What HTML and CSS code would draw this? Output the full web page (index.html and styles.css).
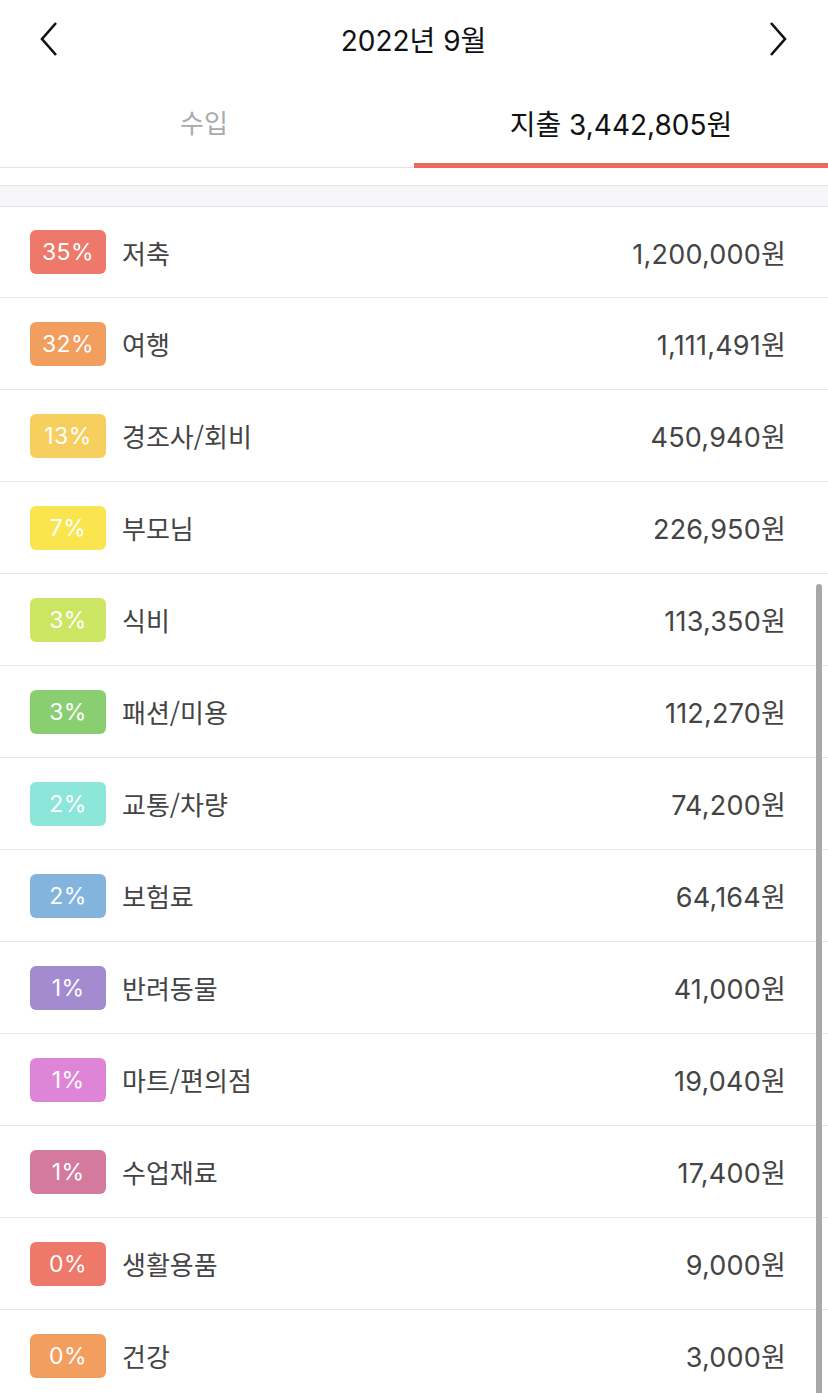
FILE: index.html
```html
<!DOCTYPE html>
<html lang="ko">
<head>
<meta charset="utf-8">
<link rel="stylesheet" href="styles.css">
</head>
<body>
<div class="page">
  <header class="header">
    <svg class="chev" width="20" height="36" viewBox="0 0 20 36"><path d="M17 2 L3 18 L17 34" fill="none" stroke="#111" stroke-width="2.6"/></svg>
    <div class="title">2022년 9월</div>
    <svg class="chev" width="20" height="36" viewBox="0 0 20 36"><path d="M3 2 L17 18 L3 34" fill="none" stroke="#111" stroke-width="2.6"/></svg>
  </header>
  <nav class="tabs">
    <div class="tab"><span class="tab-text">수입</span></div>
    <div class="tab active">지출 3,442,805원</div>
  </nav>
  <div class="spacer"></div>
  <div class="band"></div>
  <ul class="list">
    <li class="row"><span class="badge c1">35%</span><span class="label">저축</span><span class="amount">1,200,000원</span></li>
    <li class="row"><span class="badge c2">32%</span><span class="label">여행</span><span class="amount">1,111,491원</span></li>
    <li class="row"><span class="badge c3">13%</span><span class="label">경조사/회비</span><span class="amount">450,940원</span></li>
    <li class="row"><span class="badge c4">7%</span><span class="label">부모님</span><span class="amount">226,950원</span></li>
    <li class="row"><span class="badge c5">3%</span><span class="label">식비</span><span class="amount">113,350원</span></li>
    <li class="row"><span class="badge c6">3%</span><span class="label">패션/미용</span><span class="amount">112,270원</span></li>
    <li class="row"><span class="badge c7">2%</span><span class="label">교통/차량</span><span class="amount">74,200원</span></li>
    <li class="row"><span class="badge c8">2%</span><span class="label">보험료</span><span class="amount">64,164원</span></li>
    <li class="row"><span class="badge c9">1%</span><span class="label">반려동물</span><span class="amount">41,000원</span></li>
    <li class="row"><span class="badge c10">1%</span><span class="label">마트/편의점</span><span class="amount">19,040원</span></li>
    <li class="row"><span class="badge c11">1%</span><span class="label">수업재료</span><span class="amount">17,400원</span></li>
    <li class="row"><span class="badge c1">0%</span><span class="label">생활용품</span><span class="amount">9,000원</span></li>
    <li class="row"><span class="badge c2">0%</span><span class="label">건강</span><span class="amount">3,000원</span></li>
  </ul>
  <div class="scrollbar"></div>
</div>
</body>
</html>
```
FILE: styles.css
```css
* { box-sizing: border-box; }
html, body { margin: 0; padding: 0; background: #fff; }
body {
  font-family: "Noto Sans CJK KR", "Noto Sans", sans-serif;
  overflow: hidden;
  height: 1393px;
}
.page { position: relative; width: 828px; height: 1393px; overflow: hidden; }
.header {
  height: 82px;
  display: flex;
  align-items: center;
  justify-content: space-between;
  padding: 0 40px 4px 39px;
}
.title {
  font-family: Inter, "Noto Sans CJK KR", sans-serif;
  font-size: 28px;
  color: #111;
}
.chev { display: block; }
.tabs {
  display: grid;
  grid-template-columns: 414px 414px;
  height: 86px;
  border-bottom: 1px solid #e4e4e4;
}
.tab {
  display: flex;
  align-items: center;
  justify-content: center;
  font-family: Inter, "Noto Sans CJK KR", sans-serif;
  font-size: 26px;
  color: #aaa;
  padding-bottom: 6px;
}
.tab-text { margin-right: 6px; }
.tab.active {
  color: #111;
  font-size: 28px;
  border-bottom: 5px solid #ea6b5e;
  margin-bottom: -1px;
  padding: 0;
}
.spacer { height: 17px; }
.band {
  height: 22px;
  background: #f6f6f8;
  border-top: 1px solid #e6e6e8;
  border-bottom: 1px solid #e6e6e8;
}
.list { list-style: none; margin: 0; padding: 0; }
.row {
  height: 92px;
  display: flex;
  align-items: center;
  padding: 0 42px 0 30px;
  border-bottom: 1px solid #e6e6e6;
}
.row:first-child { height: 91px; }
.badge {
  width: 76px;
  height: 44px;
  border-radius: 6px;
  display: flex;
  align-items: center;
  justify-content: center;
  color: #fff;
  font-size: 23px;
  font-family: Inter, sans-serif;
  letter-spacing: 0.4px;
}
.label {
  margin-left: 16px;
  font-size: 26px;
  color: #444;
  flex: 1;
}
.amount {
  font-size: 27px;
  color: #444;
  font-family: Inter, "Noto Sans CJK KR", sans-serif;
  letter-spacing: 0.2px;
}
.c1 { background: #ee7869; }
.c2 { background: #f19e5f; }
.c3 { background: #f6cf5f; }
.c4 { background: #fae54e; }
.c5 { background: #cce563; }
.c6 { background: #89cf72; }
.c7 { background: #8ce6da; }
.c8 { background: #82b4de; }
.c9 { background: #a38bd0; }
.c10 { background: #df85d8; }
.c11 { background: #d47a9e; }
.scrollbar {
  position: absolute;
  left: 816px;
  top: 584px;
  width: 6px;
  height: 820px;
  border-radius: 3px;
  background: #a8a8a8;
}
```
